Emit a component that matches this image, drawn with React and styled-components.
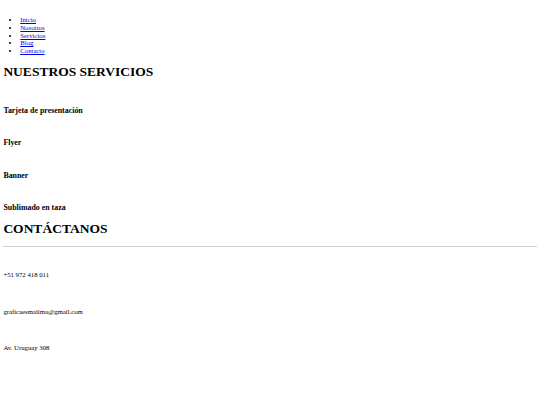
import React from "react";
import styled, { createGlobalStyle } from "styled-components";

const Global = createGlobalStyle`
  html, body { margin: 0; padding: 0; background: #fff; }
  body {
    font-family: "Liberation Serif", "Times New Roman", serif;
    font-size: 6.75px;
    line-height: normal;
    color: #000;
  }
`;

const Page = styled.div`
  padding: 3.375px;
`;

const Header = styled.header`
  padding-top: 6px;
`;

const NavList = styled.ul`
  margin: 6.75px 0;
  padding-left: 16.875px;
  list-style: disc;
`;

const NavItem = styled.li`
  line-height: 7.77px;
`;

const NavLink = styled.a`
  color: #0000ee;
  text-decoration: underline;
`;

const Heading = styled.h1`
  font-size: 13.5px;
  font-weight: bold;
  margin: 9.05px 0;
  line-height: 15.5px;
`;

const Services = styled.section``;

const Card = styled.div`
  padding-top: ${(p) => (p.$first ? 9.3 : 7.55)}px;
`;

const CardTitle = styled.h3`
  font-size: 7.9px;
  font-weight: bold;
  line-height: 9.07px;
  margin: 7.9px 0;
`;

const Contact = styled.section``;

const Rule = styled.hr`
  margin: 3.375px 0;
  border: none;
  border-top: 1px solid #cfcfcf;
  height: 0;
`;

const InfoBlock = styled.div`
  padding-top: ${(p) => p.$top}px;
`;

const InfoText = styled.p`
  margin: 0;
  line-height: 7.77px;
`;

const links = ["Inicio", "Nosotros", "Servicios", "Blog", "Contacto"];
const services = [
  "Tarjeta de presentación",
  "Flyer",
  "Banner",
  "Sublimado en taza",
];
const contacts = ["+51 972 418 011", "graficaesmalima@gmail.com", "Av. Uruguay 308"];

export default function App() {
  return (
    <>
      <Global />
      <Page>
        <Header>
          <nav>
            <NavList>
              {links.map((l) => (
                <NavItem key={l}>
                  <NavLink href="#">{l}</NavLink>
                </NavItem>
              ))}
            </NavList>
          </nav>
        </Header>
        <Services>
          <Heading>NUESTROS SERVICIOS</Heading>
          {services.map((s, i) => (
            <Card key={s} $first={i === 0}>
              <CardTitle>{s}</CardTitle>
            </Card>
          ))}
        </Services>
        <Contact>
          <Heading>CONTÁCTANOS</Heading>
          <Rule />
          {contacts.map((c, i) => (
            <InfoBlock key={c} $top={i === 0 ? 21.5 : 28.7}>
              <InfoText>{c}</InfoText>
            </InfoBlock>
          ))}
        </Contact>
      </Page>
    </>
  );
}
